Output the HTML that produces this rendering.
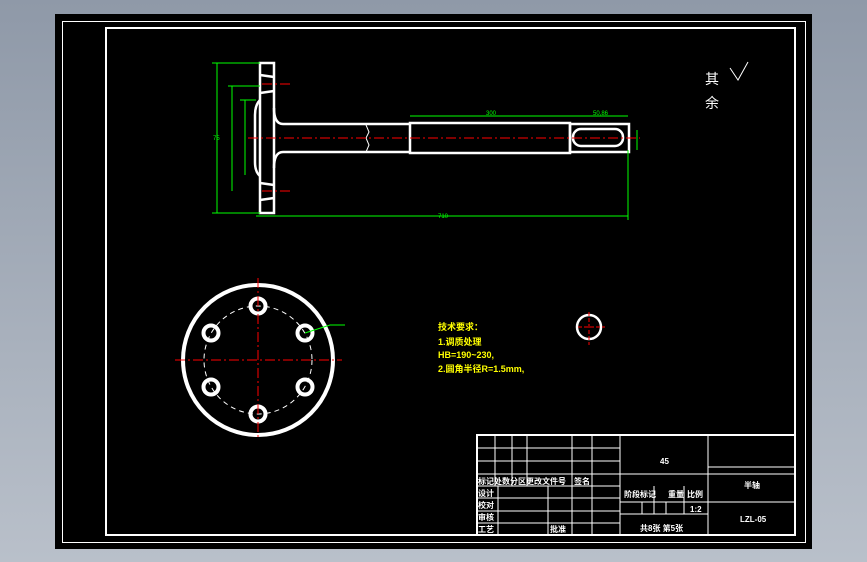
<!DOCTYPE html><html><head><style>body{margin:0;background:#a7aebb}svg{display:block}</style></head><body>
<svg width="867" height="562" viewBox="0 0 867 562" xmlns="http://www.w3.org/2000/svg" font-family="Liberation Sans, Noto Sans CJK SC, sans-serif">
<defs><linearGradient id="g" x1="0" y1="0" x2="0" y2="1"><stop offset="0" stop-color="#8f99a8"/><stop offset="1" stop-color="#b9c0ca"/></linearGradient></defs>
<rect width="867" height="562" fill="url(#g)"/>
<rect x="55" y="14" width="757" height="535" fill="#000"/>
<rect x="62.5" y="21.5" width="743" height="521" fill="none" stroke="#fff" stroke-width="1"/>
<rect x="106" y="28" width="689" height="507" fill="none" stroke="#fff" stroke-width="2"/>
<g stroke="#fff" stroke-width="2.5" fill="none">
<rect x="260" y="63" width="14" height="150"/>
<path d="M260 75 L274 77 M260 93 L274 91 M260 183 L274 185 M260 200 L274 198"/>
<path d="M260 100 Q255 105 255 115 L255 162 Q255 172 260 176"/>
<path d="M274 108 Q274 124 283 124 L410 124 M274 168 Q274 152 283 152 L410 152"/>
<rect x="410" y="123" width="160" height="30"/>
<rect x="570" y="124" width="59" height="28"/>
<rect x="573" y="129" width="50" height="17" rx="8"/>
</g>
<path d="M366 125 L369 132 L366 138 L369 145 L366 152" stroke="#fff" fill="none"/>
<g stroke="#0f0" stroke-width="1" fill="none">
<path d="M217 63 V213 M232 86 V191 M245 100 V175 M256 216 H628 M410 116 H570 M570 116 H628 M628 150 V220 M637 130 V150 M212 63 H260 M228 86 H260 M240 100 H256 M212 213 H260"/>
</g>
<g stroke="#f00" stroke-width="1" stroke-dasharray="10 3 2 3"><path d="M248 138 H640 M262 84 H292 M262 191 H292"/></g>
<g fill="#0f0" font-size="6"><text x="438" y="218">710</text><text x="486" y="115">300</text><text x="593" y="115">50,86</text><text x="213" y="140">75</text></g>
<text x="705" y="84" fill="#fff" font-size="14">其</text><text x="705" y="108" fill="#fff" font-size="14">余</text>
<path d="M730 68 L738 80 L748 62" stroke="#fff" fill="none"/>
<circle cx="258" cy="360" r="75" fill="none" stroke="#fff" stroke-width="4"/>
<circle cx="258" cy="360" r="54" fill="none" stroke="#fff" stroke-width="1" stroke-dasharray="5 4"/>
<g fill="none" stroke="#fff" stroke-width="4">
<circle cx="258" cy="306" r="7.5"/><circle cx="305" cy="333" r="7.5"/><circle cx="305" cy="387" r="7.5"/>
<circle cx="258" cy="414" r="7.5"/><circle cx="211" cy="387" r="7.5"/><circle cx="211" cy="333" r="7.5"/></g>
<g stroke="#f00" stroke-width="1" stroke-dasharray="10 3 2 3"><path d="M175 360 H342 M258 278 V440"/></g>
<path d="M305 333 L330 325 H345" stroke="#0f0" fill="none"/>
<circle cx="589" cy="327" r="12" fill="none" stroke="#fff" stroke-width="2.5"/>
<path d="M578 327 H605 M589 312 V345" stroke="#f00" stroke-dasharray="4 2"/>
<g fill="#ff0" font-size="9" font-weight="bold"><text x="438" y="330">技术要求：</text><text x="438" y="345">1.调质处理</text><text x="438" y="358">HB=190~230,</text><text x="438" y="372">2.圆角半径R=1.5mm,</text></g>
<g stroke="#fff" fill="none">
<rect x="477" y="435" width="318" height="100" stroke-width="2"/>
<path d="M477 448 H620 M477 461 H620 M477 474 H620 M477 486 H620 M477 498 H620 M477 511 H620 M477 523 H620 M620 474 H795 M620 502 H708 M620 514 H708 M708 467 H795 M708 502 H795 M620 435 V535 M708 435 V535 M495 435 V486 M512 435 V486 M527 435 V486 M572 435 V535 M592 435 V535 M498 486 V535 M548 486 V535 M642 502 V514 M654 502 V514 M666 502 V514 M684 486 V514 M654 486 V502"/>
</g>
<g fill="#fff" font-size="8" font-weight="bold"><text x="660" y="464">45</text><text x="744" y="488">半轴</text><text x="740" y="522">LZL-05</text>
<text x="478" y="484">标记处数分区更改文件号</text><text x="574" y="484">签名</text><text x="478" y="496">设计</text><text x="478" y="508">校对</text><text x="478" y="520">审核</text><text x="478" y="532">工艺</text>
<text x="624" y="497">阶段标记</text><text x="668" y="497">重量</text><text x="687" y="497">比例</text><text x="690" y="512">1:2</text><text x="640" y="531">共8张 第5张</text><text x="550" y="532">批准</text></g>
</svg></body></html>
